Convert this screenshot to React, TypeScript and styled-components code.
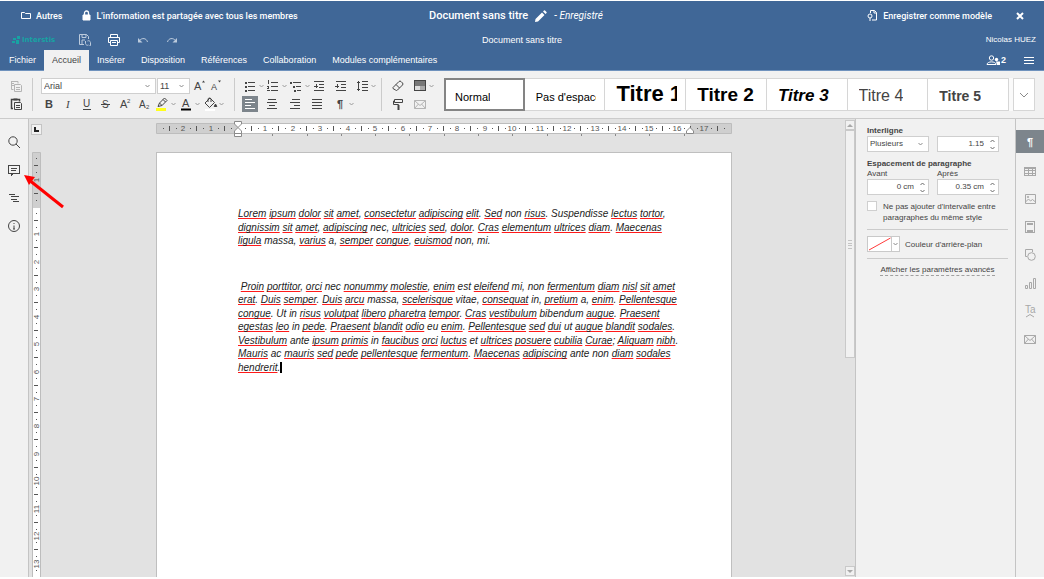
import React from 'react';
import styled, { createGlobalStyle, css } from 'styled-components';

const ui = '"Liberation Sans", Arial, sans-serif';
const brand = 'Roboto, "Liberation Sans", sans-serif';
const blue = '#406797';
const panel = '#f1f1f1';
const line = '#cbcbcb';
const ink = '#444444';

const Global = createGlobalStyle`
  *, *::before, *::after { box-sizing: border-box; }
  body { margin: 0; background: #ffffff; overflow: hidden; }
  button, input, select { font: inherit; color: inherit; }
  button { padding: 0; border: 0; background: none; cursor: pointer; }
  svg { display: block; flex: none; }
`;

const Shell = styled.div`
  display: flex;
  flex-direction: column;
  height: 100vh;
  padding: 1px 0 2px;
  font: 9px/12px ${ui};
  color: ${ink};
`;

/* ---------- header ---------- */

const Header = styled.header`
  background: ${blue};
  color: #ffffff;
  border-bottom: 1px solid #6f92bd;
  flex: none;
`;

const HeaderRow = styled.div<{ $h: number }>`
  display: grid;
  grid-template-columns: 1fr auto 1fr;
  align-items: center;
  height: ${(p) => p.$h}px;
`;

const Side = styled.div<{ $pad: string; $end?: boolean; $gap: number }>`
  display: flex;
  align-items: center;
  gap: ${(p) => p.$gap}px;
  padding: ${(p) => p.$pad};
  ${(p) => p.$end && css`justify-content: flex-end;`}
`;

const BrandLink = styled.a`
  display: flex;
  align-items: center;
  gap: 5px;
  color: #ffffff;
  text-decoration: none;
  font: 500 9px/14px ${brand};
  white-space: nowrap;
`;

const DocTitle = styled.h1`
  display: flex;
  align-items: center;
  gap: 7px;
  margin: 0;
  padding-right: 12px;
  font: 500 11px/14px ${brand};
`;

const SavedState = styled.em`
  font: italic 400 10px/14px ${brand};
`;

const UserName = styled.span`
  font: 8px/12px ${ui};
`;

const IconButton = styled.button<{ $dim?: boolean }>`
  display: grid;
  place-items: center;
  width: 16px;
  height: 16px;
  color: ${(p) => (p.$dim ? '#bccbdd' : '#ffffff')};
`;

const Logo = styled.span`
  display: flex;
  align-items: center;
  gap: 2px;
  width: 52px;
  color: #17a3a3;
  font: 700 7px/10px "DejaVu Sans", sans-serif;
`;

const TabBar = styled.nav`
  display: flex;
  align-items: stretch;
  justify-content: space-between;
  height: 20px;
`;

const Tabs = styled.div`
  display: flex;
  padding-left: 1px;
`;

const Tab = styled.button<{ $active?: boolean }>`
  padding: 0 8px;
  font: 9px/20px ${ui};
  color: #ffffff;
  ${(p) => p.$active && css`
    background: ${panel};
    color: ${ink};
    margin-bottom: -1px;
    padding-bottom: 1px;
  `}
`;

const TabTools = styled.div`
  display: flex;
  align-items: center;
  gap: 17px;
  padding-right: 9px;
`;

const Users = styled.button`
  display: flex;
  align-items: center;
  color: #ffffff;
  font: 700 9px/12px ${ui};
`;

/* ---------- toolbar ---------- */

const Toolbar = styled.div`
  display: flex;
  align-items: flex-start;
  height: 48px;
  flex: none;
  padding: 7px 9px 0 8px;
  background: ${panel};
  border-bottom: 1px solid ${line};
`;

const Rows = styled.div`
  display: grid;
  grid-template-rows: 16px 16px;
  row-gap: 2px;
`;

const Row = styled.div<{ $indent?: number; $gap?: number }>`
  display: flex;
  align-items: center;
  gap: ${(p) => p.$gap ?? 0}px;
  padding-left: ${(p) => p.$indent ?? 0}px;
`;

const SixColumns = styled.div`
  display: grid;
  grid-template-columns: repeat(6, 1fr);
  width: 135px;
`;

const Divider = styled.span<{ $l: number; $r: number }>`
  width: 1px;
  height: 33px;
  margin: 0 ${(p) => p.$r}px 0 ${(p) => p.$l}px;
  background: ${line};
`;

const Tool = styled.button<{ $w?: number; $on?: boolean; $off?: boolean }>`
  display: grid;
  place-items: center;
  width: ${(p) => p.$w ?? 16}px;
  height: 16px;
  color: ${(p) => (p.$on ? '#ffffff' : p.$off ? '#b4b4b4' : ink)};
  ${(p) => p.$on && css`background: #7d858c;`}
`;

const Split = styled.span`
  display: flex;
  align-items: center;
`;

const Arrow = styled.button`
  display: grid;
  place-items: center;
  width: 7px;
  height: 16px;
  color: #9a9a9a;
`;

const Field = styled.label<{ $w: number }>`
  display: grid;
  grid-template-columns: 1fr 10px;
  align-items: center;
  width: ${(p) => p.$w}px;
  height: 16px;
  border: 1px solid #cfcfcf;
  background: #ffffff;
  color: #8a8a8a;
  & + & { margin-left: 1px; }
`;

const Picker = styled.select<{ $small?: boolean }>`
  grid-area: 1 / 1 / 2 / 3;
  appearance: none;
  width: 100%;
  height: 14px;
  padding: 0 2px;
  border: 0;
  background: transparent;
  color: ${ink};
  font: ${(p) => (p.$small ? 8 : 9)}px/12px ${ui};
`;

const FieldMark = styled.span`
  grid-area: 1 / 2;
  pointer-events: none;
`;

const GalleryHolder = styled.div`
  display: flex;
  flex: 1;
  min-width: 0;
  margin-left: 9px;
`;

const Gallery = styled.div`
  display: flex;
  flex: 1;
  min-width: 0;
  height: 33px;
  border-right: 4px solid #fafafa;
`;

const StyleCard = styled.button<{ $on?: boolean }>`
  display: flex;
  align-items: flex-start;
  flex: 1 1 0;
  min-width: 0;
  padding: 0 8px 0 11px;
  border: solid #d6d6d6;
  border-width: 1px 1px 1px 0;
  background: #ffffff;
  text-align: left;
  ${(p) => p.$on && css`
    border-color: #848484;
    box-shadow: inset 2px 0 #848484, inset 0 1px #848484, inset -1px 0 #848484, inset 0 -1px #848484;
  `}
`;

/* Every sample sits on one shared baseline, whatever its size. */
const Sample = styled.span<{ $size: number; $bold?: boolean; $italic?: boolean; $tone?: string }>`
  display: block;
  overflow: hidden;
  white-space: nowrap;
  padding-bottom: 6px;
  font-family: ${ui};
  font-size: ${(p) => p.$size}px;
  line-height: 1px;
  font-weight: ${(p) => (p.$bold ? 700 : 400)};
  font-style: ${(p) => (p.$italic ? 'italic' : 'normal')};
  color: ${(p) => p.$tone ?? '#000000'};
  &::before {
    content: '';
    display: inline-block;
    height: 22px;
  }
`;

const GalleryMore = styled.button`
  display: grid;
  place-items: center;
  width: 22px;
  height: 33px;
  border: 1px solid #d6d6d6;
  background: #ffffff;
  color: #8a8a8a;
`;

/* ---------- workspace ---------- */

const Workspace = styled.div`
  position: relative;
  display: flex;
  flex: 1;
  min-height: 0;
`;

const Rail = styled.nav`
  display: flex;
  flex-direction: column;
  flex: none;
  width: 29px;
  padding-top: 11px;
  border-left: 1px solid #c4c4c4;
  background: ${panel};
`;

const LeftRail = styled(Rail)`
  padding-top: 9px;
  border-left: 0;
  border-right: 1px solid #c4c4c4;
`;

const RailButton = styled.button<{ $on?: boolean; $soft?: boolean }>`
  display: grid;
  place-items: center;
  width: 100%;
  height: ${(p) => (p.$on ? 23 : 28)}px;
  margin-bottom: ${(p) => (p.$on ? 4 : 0)}px;
  color: ${(p) => (p.$on ? '#ffffff' : p.$soft ? '#a8a8a8' : ink)};
  ${(p) => p.$on && css`background: #7d858c;`}
`;

const Canvas = styled.main`
  display: grid;
  grid-template-columns: 14px 1fr;
  grid-template-rows: 33px 1fr;
  flex: 1;
  min-width: 0;
  background: #e2e2e2;
  overflow: hidden;
`;

const TabStop = styled.button`
  display: grid;
  place-items: center;
  width: 11px;
  height: 11px;
  margin: 5px 0 0 2px;
  border: 1px solid #c4c4c4;
  background: ${panel};
`;

const TopRuler = styled.div`
  display: flex;
  justify-content: center;
  overflow: hidden;
`;

const SideRuler = styled.div`
  overflow: hidden;
  padding-left: 2px;
  min-height: 0;
`;

const PageArea = styled.div`
  display: flex;
  justify-content: center;
  min-height: 0;
  overflow: hidden;
`;

const Page = styled.article`
  flex: none;
  width: 576px;
  padding: 54px 40px 0 81px;
  border: solid #bfbfbf;
  border-width: 1px 1px 0 1px;
  background: #ffffff;
  color: #222222;
  font-family: ${ui};
  font-size: 10px;
  font-style: italic;
  line-height: 1.35;
`;

const Paragraph = styled.p`
  margin: 0 0 32px;
  white-space: pre;
`;

const Misspelt = styled.span`
  text-decoration: underline 1px #ff1a1a;
  text-decoration-skip-ink: none;
  text-underline-offset: 1px;
`;

const Caret = styled.span`
  border-left: 2px solid #000000;
`;

const ScrollTrack = styled.div`
  display: flex;
  flex-direction: column;
  flex: none;
  width: 10px;
  padding: 1px 0;
  background: #e2e2e2;
`;

const ScrollButton = styled.button`
  display: grid;
  place-items: center;
  flex: none;
  width: 10px;
  height: 10px;
  border: 1px solid #c9c9c9;
  background: ${panel};
  color: #a8a8a8;
`;

const Thumb = styled.div`
  display: grid;
  place-items: center;
  flex: 0 0 50%;
  border: 1px solid #c9c9c9;
  background: ${panel};
  color: #c4c4c4;
`;

const Spacer = styled.span`
  flex: 1;
`;

const Settings = styled.aside`
  flex: none;
  width: 160px;
  padding: 6px 7px 0 11px;
  border-left: 1px solid #c4c4c4;
  background: ${panel};
  font: 8px/11px ${ui};
`;

const Heading = styled.h2`
  margin: 0;
  font: 700 8px/11px ${ui};
`;

const Pair = styled.div`
  display: grid;
  grid-template-columns: 62px 62px;
  column-gap: 8px;
`;

const Label = styled.label`
  line-height: 10px;
`;

const Gap = styled.div`
  height: 6px;
`;

const Spin = styled.div`
  display: grid;
  grid-template-columns: 1fr 12px;
  height: 16px;
  border: 1px solid #cfcfcf;
  background: #ffffff;
`;

const SpinInput = styled.input`
  width: 100%;
  min-width: 0;
  padding: 0 2px 0 0;
  border: 0;
  background: none;
  text-align: right;
  font: 8px/12px ${ui};
`;

const SpinButtons = styled.span`
  display: grid;
  grid-template-rows: 7px 7px;
  place-items: center;
  color: #6a6a6a;
`;

const SpinButton = styled.button`
  display: grid;
  place-items: center;
  width: 10px;
  height: 7px;
`;

const CheckRow = styled.label`
  display: flex;
  align-items: flex-start;
  gap: 6px;
  margin-top: 6px;
  white-space: nowrap;
`;

const Check = styled.input`
  appearance: none;
  flex: none;
  width: 10px;
  height: 10px;
  margin: 0;
  border: 1px solid #cfcfcf;
  background: #ffffff;
  &:checked { background: #7d858c; }
`;

const Rule = styled.hr`
  margin: 0;
  border: 0;
  border-top: 1px solid ${line};
`;

const FillRow = styled.div`
  display: flex;
  align-items: center;
  gap: 5px;
  height: 28px;
`;

const Swatch = styled.button`
  display: flex;
  align-items: center;
  gap: 1px;
  width: 33px;
  height: 16px;
  border: 1px solid #c9c9c9;
  background: #ffffff;
  color: #8a8a8a;
`;

const Advanced = styled.a`
  display: block;
  width: max-content;
  margin: 5px auto 0;
  border-bottom: 1px dashed #a0a0a0;
  color: ${ink};
  text-decoration: none;
`;

const Pointer = styled.svg`
  position: absolute;
  left: 22px;
  top: 52px;
  pointer-events: none;
`;

/* ---------- drawings ---------- */

type Art = { w?: number; h?: number; children: React.ReactNode; crisp?: boolean };
const Svg = ({ w = 16, h = 16, crisp, children }: Art) => (
  <svg width={w} height={h} viewBox={`0 0 ${w} ${h}`} fill="none" stroke="currentColor" strokeWidth={1}
    shapeRendering={crisp ? 'crispEdges' : undefined} aria-hidden="true">
    {children}
  </svg>
);

const Chevron = ({ up = false, big = false }: { up?: boolean; big?: boolean }) =>
  big ? (
    <Svg w={10} h={6}><path d="M1 1l4 4 4-4" /></Svg>
  ) : (
    <Svg w={5} h={4}><path d={up ? 'M.5 3l2-2 2 2' : 'M.5 1l2 2 2-2'} /></Svg>
  );

const bars = (rows: [number, number, number][]) => rows.map(([x, y, w], i) => (
  <path key={i} d={`M${x} ${y + 0.5}h${w}`} />
));

const Lines = ({ rows, children }: { rows: [number, number, number][]; children?: React.ReactNode }) => (
  <Svg crisp>{bars(rows)}{children}</Svg>
);

const glyph = (s: string, x: number, y: number, size: number, extra: React.SVGProps<SVGTextElement> = {}) => (
  <text x={x} y={y} fontSize={size} fontFamily="Liberation Sans, Arial, sans-serif" fill="currentColor" stroke="none" {...extra}>{s}</text>
);

const Copy = () => (
  <Svg><path d="M5.500 11.500H3.500v-2M3 3.500h7v2M3 5.500h3M3 7.500h3M3.500 3v7" /><path d="M6.500 6.500h6l1 1v6h-7zM8 9.500h4M8 11.500h4" /></Svg>
);
const Paste = () => (
  <Svg><path d="M5 12.500H3.500v-9h8v2" strokeWidth={1.5} /><path d="M6.500 6.500h6l1 1v6h-7zM8 9.500h4M8 11.500h4" /><path d="M5.500 3.500h4" strokeWidth={2} /></Svg>
);
const Highlighter = () => (
  <Svg><path d="M4 10.500l1.500-3.500 5-5L13 4.500l-5 5zM5.500 7L8 9.500M9 3.500L11.500 6" /><path d="M2 13.500h10" stroke="#ffff1a" strokeWidth={3} /></Svg>
);
const FontColor = () => (
  <Svg>{glyph('A', 4, 11, 11)}<path d="M3 13.500h10" stroke="#000" strokeWidth={2} /></Svg>
);
const Bucket = () => (
  <Svg><path d="M3 7l5-5 4.500 4.500-5 5zM6 6V3.500a1.500 1.500 0 013 0V6" /><path d="M13.500 8l1.300 2.500h-2.600z" fill="currentColor" /><path d="M3 14h10" stroke="#fff" strokeWidth={2} /></Svg>
);
const Eraser = () => (
  <Svg><path d="M3 9.500L9 3.500q1-1 2 0l1.500 1.500q1 1 0 2l-5 5q-1 1-2 0L3 10.500q-.5-.5 0-1zM6 6.500l3.500 3.500" /></Svg>
);
const Scheme = () => (
  <Svg crisp><path d="M3 3h10v5H3z" fill="#777" stroke="none" /><path d="M3 8h5v5H3z" fill="#ddd" stroke="none" /><path d="M8 8h5v5H8z" fill="#aaa" stroke="none" /><path d="M2.500 2.500h11v10h-11z" /></Svg>
);
const Roller = () => (
  <Svg><path d="M4.500 3.500h8v3h-8zM4.500 5h-1v3.500h5V10" /><path d="M8.500 9v5" strokeWidth={2} /></Svg>
);
const Envelope = () => (
  <Svg><path d="M2.500 4.500h11v8h-11zM2.500 4.500L8 9.500l5.500-5M2.500 12.500L6.500 8M13.500 12.500L9.500 8" /></Svg>
);
const Printer = () => (
  <Svg><path d="M4.500 5.500v-3h7v3M4.500 10.500h-2v-5h11v5h-2M4.500 8.500h7v5h-7zM6 10.500h4" /></Svg>
);
const SaveSync = () => (
  <Svg><path d="M7 12.500H2.500v-10h7l2 2v2.500M5 2.500v3h4v-3M5 12v-4h3" /><path d="M12.500 13.500h1v-3a2 2 0 00-3-1.500M8.500 9v2.500a2 2 0 003 1.500" /></Svg>
);
const Undo = ({ flip = false }: { flip?: boolean }) => (
  <Svg><g transform={flip ? 'matrix(-1 0 0 1 16 0)' : undefined}><path d="M4.500 8.500c2.500-3 7-2.500 8 1.500" /><path d="M3 6v4.500h4.500z" fill="currentColor" stroke="none" /></g></Svg>
);
const Folder = () => (
  <Svg w={10} h={9}><path d="M.5 7.500v-6h3l1 1h5v5z" /></Svg>
);
const Lock = () => (
  <Svg w={9} h={11}><path d="M1 5h7v5H1z" fill="currentColor" /><path d="M2.500 5V3a2 2 0 014 0v2" strokeWidth={1.3} /></Svg>
);
const Pencil = () => (
  <Svg w={12} h={12}><path d="M0 12l.5-3L7 2.500 9.500 5 3 11.500zM8 1.500L9 .5q.5-.5 1 0L11.500 2q.5.5 0 1l-1 1z" fill="currentColor" stroke="none" /></Svg>
);
const Template = () => (
  <Svg w={11} h={11}><path d="M3.500 3V.5h4l2 2v7.500H5M7 .5v2.500h2.500" /><circle cx="3" cy="6" r="2" /><path d="M3 8v3" /></Svg>
);
const Close = () => (
  <Svg w={8} h={8}><path d="M1 1l6 6M7 1L1 7" strokeWidth={2} /></Svg>
);
const People = () => (
  <Svg w={15} h={12}><circle cx="5.500" cy="4" r="2.200" /><path d="M1 10.500c0-3.500 9-3.500 9 0z" /><circle cx="10.500" cy="5.500" r="1.700" fill="currentColor" stroke="none" /><path d="M10 7.500h4v3.500h-3z" fill="currentColor" stroke="none" /></Svg>
);
const Menu = () => <Svg w={12} h={9} crisp>{bars([[1, 1, 10], [1, 4, 10], [1, 7, 10]])}</Svg>;

const Outdent = () => (
  <Lines rows={[[3, 3, 10], [8, 6, 5], [8, 9, 5], [3, 12, 10]]}><path d="M3 8h4M5.500 6v4" /></Lines>
);
const Indent = () => (
  <Lines rows={[[3, 3, 10], [8, 6, 5], [8, 9, 5], [3, 12, 10]]}><path d="M2 8h4M4.500 6v4" /></Lines>
);
const Bullets = () => (
  <Lines rows={[[6, 4, 7], [6, 8, 7], [6, 12, 7]]}><path d="M3 4.500h2M3 8.500h2M3 12.500h2" strokeWidth={2} /></Lines>
);
const Numbers = () => (
  <Lines rows={[[6, 4, 7], [6, 8, 7], [6, 12, 7]]}><path d="M3.500 2v4M2 8.500h2M3.500 8v2M2 12.500h3M2 10.500h2" /></Lines>
);
const Levels = () => (
  <Lines rows={[[5, 4, 8], [8, 8, 5], [9, 12, 4]]}><path d="M2 4.500h2M5 8.500h2M6 12.500h2" strokeWidth={2} /></Lines>
);
const Spacing = () => (
  <Svg crisp>{bars([[8, 3, 6], [8, 6, 6], [8, 9, 6], [8, 12, 6]])}<path d="M4.500 3v10M3 4.500h3M3 11.500h3" /></Svg>
);

const Search = () => <Svg><circle cx="7" cy="7" r="4.200" /><path d="M10 10l4 4" /></Svg>;
const Comment = () => (
  <Svg crisp><path d="M2.500 3.500h11v8H7l-2 2v-2H2.500zM5 6.500h6M5 8.500h5" /></Svg>
);
const Outline = () => <Lines rows={[[3, 4, 6], [5, 6, 8], [5, 9, 6], [7, 11, 6]]} />;
const Info = () => <Svg><circle cx="8" cy="8" r="5.500" /><path d="M8 7.500V11M8 5v1M7 11h2" /></Svg>;
const TableIcon = () => <Svg crisp><path d="M2.500 4.500h11v8h-11zM2.500 5.500h11M2.500 7.500h11M2.500 10.500h11M6.500 4v8M10.500 4v8" /></Svg>;
const ImageIcon = () => <Svg><path d="M3.500 3.500h10v9h-10zM3.500 11l3-3 2 2 2-1.500 3 2.500" /><circle cx="6" cy="6" r=".7" /></Svg>;
const HeaderFooter = () => <Svg crisp><path d="M3.500 2.500h9v11h-9z" /><path d="M5 4.500h6M5 11.500h6" strokeWidth={2} /></Svg>;
const Shapes = () => <Svg><path d="M5 9.500H3.500v-7h7V5" /><circle cx="9.500" cy="9.500" r="3.800" /></Svg>;
const Chart = () => <Svg><path d="M3.500 10.500h2v3h-2zM7.500 7.500h2v6h-2zM11.500 3.500h2v10h-2z" /></Svg>;
const TextArt = () => <Svg>{glyph('Ta', 3, 10, 10)}<path d="M4 14l4-2.500 4 2.500" /></Svg>;

const CM = 27.43;

const Ruler = () => {
  const cells = Array.from({ length: 21 }, (_, i) => i - 3);
  return (
    <svg width="576" height="33" viewBox="0 0 576 33" aria-hidden="true">
      <path d="M1 5h574v9H1z" fill="#fff" />
      <path d="M1 5h81v9H1zM534 5h41v9h-41z" fill="#cfcfcf" />
      <path d="M.5 4.500h575v10H.5z" fill="none" stroke="#bdbdbd" />
      {cells.map((c) => {
        const x = Math.round(82 + c * CM);
        return (
          <g key={c} fill="#555555">
            {c !== 0 && c > -3 && (
              <text x={x} y={12} fontSize={8} textAnchor="middle" fontFamily="Liberation Sans, Arial, sans-serif">{Math.abs(c)}</text>
            )}
            {x + 7 > 4 && <path d={`M${x + 7} 9h1v1h-1z`} />}
            {x + 14 < 570 && <path d={`M${x + 13} 7h1v5h-1z`} />}
            {x + 20 < 570 && <path d={`M${x + 20} 9h1v1h-1z`} />}
          </g>
        );
      })}
      {Array.from({ length: 13 }, (_, i) => (
        <path key={i} d={`M${Math.round(82 + (i + 1) * CM * 1.25)} 15h1v2h-1z`} fill="#888888" />
      ))}
      <g fill="#fff" stroke="#8a8a8a">
        <path d="M78.500 2.500h7v2.500L82 8.500 78.500 5z" />
        <path d="M82 8.500l3.500 3.500v2.500h-7V12zM78.500 14.500h7v3h-7z" />
        <path d="M534 8.500l3.500 3.500v2.500h-7V12z" />
      </g>
    </svg>
  );
};

/* The sheet is A4, so the scale stops at its lower edge. */
const VerticalRuler = () => (
  <svg width="12" height="815" viewBox="0 0 12 815" aria-hidden="true">
    <path d="M1 1h9v814H1z" fill="#fff" />
    <path d="M1 1h9v55H1z" fill="#cfcfcf" />
    <path d="M1.500 815V.5h8V815" fill="none" stroke="#bdbdbd" />
    {Array.from({ length: 29 }, (_, i) => i - 2).map((c) => {
      const y = Math.round(55 + c * CM);
      return (
        <g key={c} fill="#555555">
          {c !== 0 && c > -2 && (
            <text transform={`translate(8 ${y}) rotate(-90)`} fontSize={8} textAnchor="middle" fontFamily="Liberation Sans, Arial, sans-serif">{Math.abs(c)}</text>
          )}
          <path d={`M5 ${y + 6}h1v1h-1zM3 ${y + 13}h4v1h-4zM5 ${y + 20}h1v1h-1z`} />
        </g>
      );
    })}
  </svg>
);

/* ---------- content ---------- */

const first = [
  '[Lorem] [ipsum] [dolor] [sit] [amet], [consectetur] [adipiscing] [elit]. [Sed] non [risus]. Suspendisse [lectus] [tortor],',
  '[dignissim] [sit] [amet], [adipiscing] nec, [ultricies] [sed], [dolor]. [Cras] [elementum] [ultrices] [diam]. [Maecenas]',
  '[ligula] massa, [varius] a, [semper] [congue], [euismod] non, mi.',
].join('\n');

const second = [
  ' [Proin] [porttitor], [orci] nec [nonummy] [molestie], [enim] est [eleifend] mi, non [fermentum] [diam] [nisl] [sit] [amet]',
  '[erat]. [Duis] [semper]. [Duis] [arcu] massa, [scelerisque] vitae, [consequat] in, [pretium] a, [enim]. [Pellentesque]',
  '[congue]. Ut in [risus] [volutpat] [libero] [pharetra] [tempor]. [Cras] [vestibulum] bibendum [augue]. [Praesent]',
  '[egestas] [leo] in [pede]. [Praesent] [blandit] [odio] eu [enim]. [Pellentesque] [sed] [dui] ut [augue] [blandit] [sodales].',
  '[Vestibulum] ante [ipsum] [primis] in [faucibus] [orci] [luctus] et [ultrices] [posuere] [cubilia] [Curae]; [Aliquam] [nibh].',
  '[Mauris] ac [mauris] [sed] [pede] [pellentesque] [fermentum]. [Maecenas] [adipiscing] ante non [diam] [sodales]',
  '[hendrerit].',
].join('\n');

/* Words in square brackets are the ones flagged by the spell checker. */
const Checked = ({ text }: { text: string }) => (
  <>
    {text.split(/(\[[^\]]+\])/).map((part, i) =>
      part.startsWith('[') ? <Misspelt key={i}>{part.slice(1, -1)}</Misspelt> : part,
    )}
  </>
);

const tabs = ['Fichier', 'Accueil', 'Insérer', 'Disposition', 'Références', 'Collaboration', 'Modules complémentaires'];

const WithArrow = ({ label, w, children }: { label: string; w?: number; children: React.ReactNode }) => (
  <Split>
    <Tool $w={w} aria-label={label}>{children}</Tool>
    <Arrow aria-label={`${label} : options`}><Chevron /></Arrow>
  </Split>
);

const Spinner = ({ id, value, label }: { id: string; value: string; label?: string }) => (
  <Spin>
    <SpinInput id={id} defaultValue={value} aria-label={label} />
    <SpinButtons>
      <SpinButton aria-label="Augmenter"><Chevron up /></SpinButton>
      <SpinButton aria-label="Diminuer"><Chevron /></SpinButton>
    </SpinButtons>
  </Spin>
);

const StyleGallery = () => (
  <GalleryHolder>
    <Gallery>
      <StyleCard $on><Sample $size={11}>Normal</Sample></StyleCard>
      <StyleCard><Sample $size={11}>Pas d'espace</Sample></StyleCard>
      <StyleCard><Sample $size={22} $bold>Titre 1</Sample></StyleCard>
      <StyleCard><Sample $size={19} $bold>Titre 2</Sample></StyleCard>
      <StyleCard><Sample $size={17} $bold $italic>Titre 3</Sample></StyleCard>
      <StyleCard><Sample $size={16} $tone={ink}>Titre 4</Sample></StyleCard>
      <StyleCard><Sample $size={14} $bold $tone={ink}>Titre 5</Sample></StyleCard>
    </Gallery>
    <GalleryMore aria-label="Plus de styles"><Chevron big /></GalleryMore>
  </GalleryHolder>
);

export default function App() {
  return (
    <Shell>
      <Global />
      <Header>
        <HeaderRow $h={29}>
          <Side $pad="0 0 0 21px" $gap={20}>
            <BrandLink href="#autres"><Folder />Autres</BrandLink>
            <BrandLink href="#partage"><Lock />L'information est partagée avec tous les membres</BrandLink>
          </Side>
          <DocTitle>Document sans titre <Pencil /><SavedState>- Enregistré</SavedState></DocTitle>
          <Side $pad="0 16px 0 0" $gap={20} $end>
            <BrandLink href="#modele"><Template />Enregistrer comme modèle</BrandLink>
            <IconButton aria-label="Fermer"><Close /></IconButton>
          </Side>
        </HeaderRow>
        <HeaderRow $h={20}>
          <Side $pad="0 0 0 12px" $gap={13}>
            <Logo>
              <Svg w={8} h={8}><path d="M1 2h3v2H1zM5 0h3v3H5zM0 5h3v2H0zM4 4h3v4H4z" fill="currentColor" stroke="none" /></Svg>
              Interstis
            </Logo>
            <IconButton $dim aria-label="Enregistrer"><SaveSync /></IconButton>
            <IconButton aria-label="Imprimer"><Printer /></IconButton>
            <IconButton $dim aria-label="Annuler"><Undo /></IconButton>
            <IconButton $dim aria-label="Rétablir"><Undo flip /></IconButton>
          </Side>
          <span>Document sans titre</span>
          <Side $pad="0 8px 0 0" $gap={0} $end><UserName>Nicolas HUEZ</UserName></Side>
        </HeaderRow>
        <TabBar>
          <Tabs>{tabs.map((t) => <Tab key={t} $active={t === 'Accueil'}>{t}</Tab>)}</Tabs>
          <TabTools>
            <Users aria-label="Utilisateurs"><People />2</Users>
            <Users aria-label="Menu"><Menu /></Users>
          </TabTools>
        </TabBar>
      </Header>

      <Toolbar>
        <Rows>
          <Tool $off aria-label="Copier"><Copy /></Tool>
          <Tool aria-label="Coller"><Paste /></Tool>
        </Rows>
        <Divider $l={8} $r={6} />
        <Rows>
          <Row $indent={2}>
            <Field $w={115}>
              <Picker aria-label="Police" defaultValue="Arial"><option>Arial</option></Picker>
              <FieldMark><Chevron /></FieldMark>
            </Field>
            <Field $w={33}>
              <Picker aria-label="Taille" defaultValue="11"><option>11</option></Picker>
              <FieldMark><Chevron /></FieldMark>
            </Field>
            <Tool $w={17} aria-label="Agrandir"><Svg>{glyph('A', 3, 12, 11)}<path d="M11 4.500l1.500-2 1.500 2z" fill="currentColor" stroke="none" /></Svg></Tool>
            <Tool $w={17} aria-label="Réduire"><Svg>{glyph('A', 3, 12, 9)}<path d="M10 2.500l1.500 2 1.500-2z" fill="currentColor" stroke="none" /></Svg></Tool>
          </Row>
          <Row>
            <Tool $w={19} aria-label="Gras"><Svg>{glyph('B', 4, 12, 11, { fontWeight: 700 })}</Svg></Tool>
            <Tool $w={19} aria-label="Italique"><Svg>{glyph('I', 6, 12, 11, { fontStyle: 'italic', fontFamily: 'Liberation Serif, serif' })}</Svg></Tool>
            <Tool $w={19} aria-label="Souligné"><Svg>{glyph('U', 4, 11, 10)}<path d="M4 13.500h8" /></Svg></Tool>
            <Tool $w={19} aria-label="Barré"><Svg>{glyph('S', 4, 12, 10)}<path d="M3 8.500h9" /></Svg></Tool>
            <Tool $w={19} aria-label="Exposant"><Svg>{glyph('A', 3, 12, 11)}{glyph('2', 10, 7, 6)}</Svg></Tool>
            <Tool $w={19} aria-label="Indice"><Svg>{glyph('A', 3, 12, 10)}{glyph('2', 10, 13, 6)}</Svg></Tool>
            <WithArrow w={17} label="Surlignage"><Highlighter /></WithArrow>
            <WithArrow w={17} label="Couleur de police"><FontColor /></WithArrow>
            <WithArrow w={17} label="Arrière-plan"><Bucket /></WithArrow>
          </Row>
        </Rows>
        <Divider $l={9} $r={7} />
        <Rows>
          <SixColumns>
            <WithArrow label="Puces"><Bullets /></WithArrow>
            <WithArrow label="Numérotation"><Numbers /></WithArrow>
            <WithArrow label="Liste multiniveau"><Levels /></WithArrow>
            <Tool aria-label="Réduire le retrait"><Outdent /></Tool>
            <Tool aria-label="Augmenter le retrait"><Indent /></Tool>
            <WithArrow label="Interligne"><Spacing /></WithArrow>
          </SixColumns>
          <SixColumns>
            <Tool $on aria-label="Aligner à gauche"><Lines rows={[[3, 3, 7], [3, 6, 10], [3, 9, 6], [3, 12, 10]]} /></Tool>
            <Tool aria-label="Centrer"><Lines rows={[[4, 3, 8], [3, 6, 10], [5, 9, 6], [3, 12, 10]]} /></Tool>
            <Tool aria-label="Aligner à droite"><Lines rows={[[5, 3, 8], [3, 6, 10], [7, 9, 6], [3, 12, 10]]} /></Tool>
            <Tool aria-label="Justifier"><Lines rows={[[3, 3, 10], [3, 6, 10], [3, 9, 10], [3, 12, 10]]} /></Tool>
            <WithArrow label="Marques"><Svg>{glyph('¶', 5, 12, 11, { fontWeight: 700 })}</Svg></WithArrow>
          </SixColumns>
        </Rows>
        <Divider $l={4} $r={8} />
        <Rows>
          <Row $gap={6}>
            <Tool aria-label="Effacer le style"><Eraser /></Tool>
            <WithArrow label="Jeu de couleurs"><Scheme /></WithArrow>
          </Row>
          <Row $gap={6}>
            <Tool aria-label="Copier le style"><Roller /></Tool>
            <Tool $off aria-label="Publipostage"><Envelope /></Tool>
          </Row>
        </Rows>
        <StyleGallery />
      </Toolbar>

      <Workspace>
        <LeftRail>
          <RailButton aria-label="Rechercher"><Search /></RailButton>
          <RailButton aria-label="Commentaires"><Comment /></RailButton>
          <RailButton aria-label="Plan"><Outline /></RailButton>
          <RailButton aria-label="À propos"><Info /></RailButton>
        </LeftRail>
        <Canvas>
          <TabStop aria-label="Tabulation"><Svg w={5} h={5}><path d="M1 0v4h4" stroke="#222" strokeWidth={2} /></Svg></TabStop>
          <TopRuler><Ruler /></TopRuler>
          <SideRuler><VerticalRuler /></SideRuler>
          <PageArea>
            <Page>
              <Paragraph><Checked text={first} /></Paragraph>
              <Paragraph><Checked text={second} /><Caret /></Paragraph>
            </Page>
          </PageArea>
        </Canvas>
        <ScrollTrack>
          <ScrollButton aria-label="Défiler vers le haut"><Svg w={6} h={3}><path d="M0 3l3-3 3 3z" fill="currentColor" stroke="none" /></Svg></ScrollButton>
          <Thumb><Svg w={4} h={9} crisp><path d="M0 .5h4M0 3.500h4M0 5.500h4M0 8.500h4" /></Svg></Thumb>
          <Spacer />
          <ScrollButton aria-label="Défiler vers le bas"><Svg w={6} h={3}><path d="M0 0l3 3 3-3z" fill="currentColor" stroke="none" /></Svg></ScrollButton>
        </ScrollTrack>
        <Settings>
          <Heading>Interligne</Heading>
          <Pair>
            <Field $w={62}>
              <Picker $small aria-label="Interligne" defaultValue="Plusieurs"><option>Plusieurs</option></Picker>
              <FieldMark><Chevron /></FieldMark>
            </Field>
            <Spinner id="line" value="1.15" label="Valeur d'interligne" />
          </Pair>
          <Gap />
          <Heading>Espacement de paragraphe</Heading>
          <Pair>
            <Label htmlFor="before">Avant</Label>
            <Label htmlFor="after">Après</Label>
            <Spinner id="before" value="0 cm" />
            <Spinner id="after" value="0.35 cm" />
          </Pair>
          <CheckRow><Check type="checkbox" /><span>Ne pas ajouter d'intervalle entre<br />paragraphes du même style</span></CheckRow>
          <Gap />
          <Rule />
          <FillRow>
            <Swatch aria-label="Couleur d'arrière-plan">
              <Svg w={24} h={14}><path d="M1 13L22.500 1" stroke="#ff3b3b" /><path d="M23.500 0v14" stroke="#c9c9c9" /></Svg>
              <Chevron />
            </Swatch>
            <span>Couleur d'arrière-plan</span>
          </FillRow>
          <Rule />
          <Advanced href="#avances">Afficher les paramètres avancés</Advanced>
        </Settings>
        <Rail>
          <RailButton $on aria-label="Paragraphe"><Svg>{glyph('¶', 5, 12, 11, { fontWeight: 700 })}</Svg></RailButton>
          <RailButton $soft aria-label="Tableau"><TableIcon /></RailButton>
          <RailButton $soft aria-label="Image"><ImageIcon /></RailButton>
          <RailButton $soft aria-label="En-tête"><HeaderFooter /></RailButton>
          <RailButton $soft aria-label="Forme"><Shapes /></RailButton>
          <RailButton $soft aria-label="Graphique"><Chart /></RailButton>
          <RailButton $soft aria-label="Text Art"><TextArt /></RailButton>
          <RailButton $soft aria-label="Publipostage"><Envelope /></RailButton>
        </Rail>
        <Pointer width="44" height="38" viewBox="0 0 44 38" aria-hidden="true">
          <path d="M41 36L9 10.500" stroke="#ff0000" strokeWidth="3" />
          <path d="M2 4l11 2-6 8z" fill="#ff0000" />
        </Pointer>
      </Workspace>
    </Shell>
  );
}
